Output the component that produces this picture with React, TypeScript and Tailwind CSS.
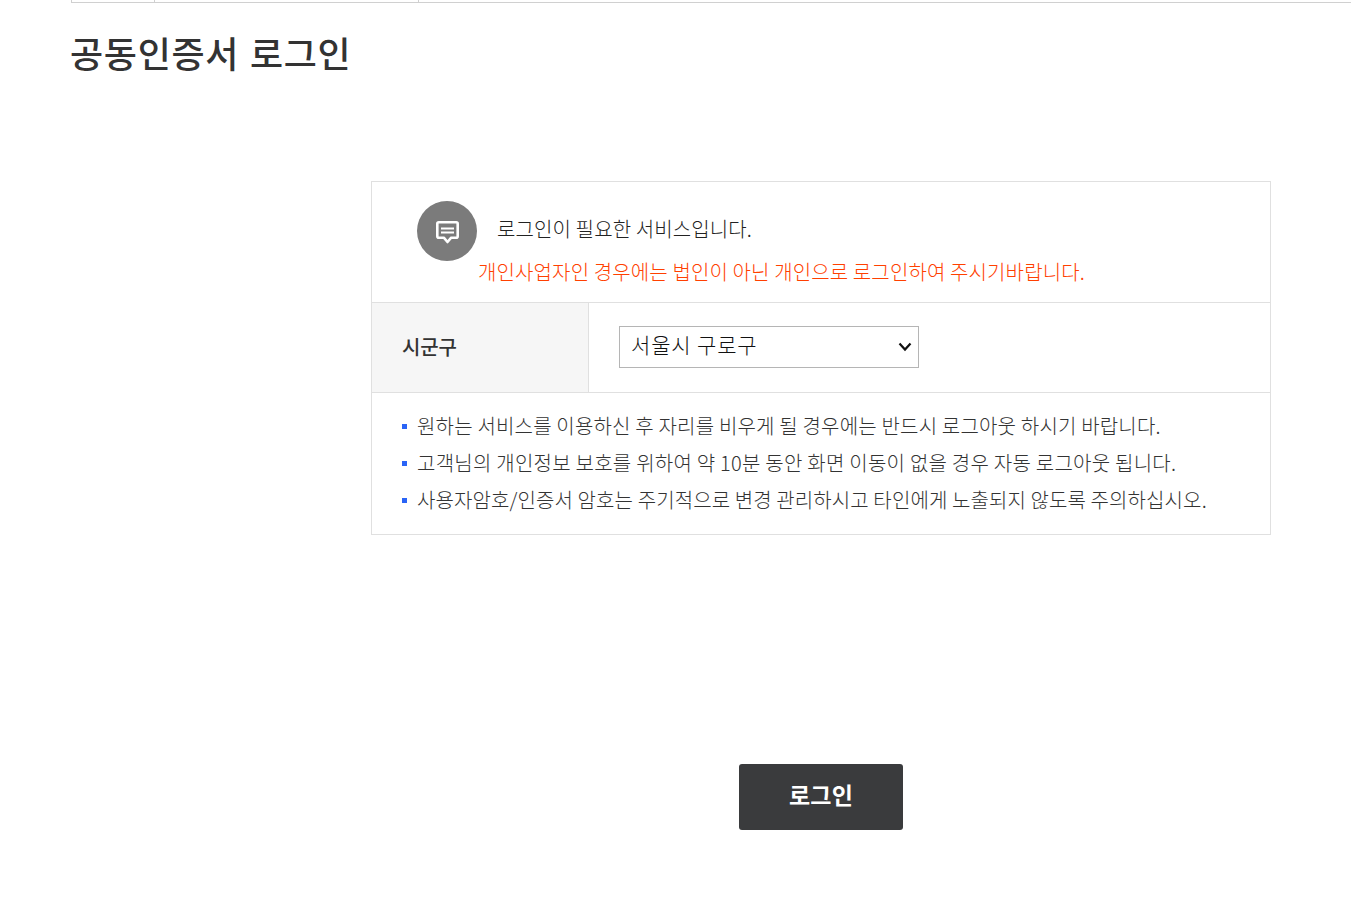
export default function App() {
  const font = { fontFamily: '"Noto Sans CJK KR", sans-serif' };
  return (
    <div style={font} className="w-[1351px] h-[913px] overflow-hidden bg-white text-[#333] flex flex-col">
      <div className="ml-[71px] h-[3px] flex border-b border-[#d0d0d0] border-l">
        <div className="w-[83px] border-r border-[#d0d0d0]" />
        <div className="w-[264px] border-r border-[#d0d0d0]" />
      </div>
      <h1 className="ml-[70px] mt-[23px] text-[36px] leading-[52px] font-medium tracking-[0.7px] [word-spacing:2px] text-[#333]">공동인증서 로그인</h1>
      <div className="ml-[371px] mt-[103px] w-[900px] border border-[#e0e0e0] flex flex-col">
        <div className="h-[121px] border-b border-[#e0e0e0] relative">
          <div className="absolute left-[45px] top-[19px] w-[60px] h-[60px] rounded-full bg-[#7b7b7b] flex items-center justify-center">
            <svg width="26" height="26" viewBox="0 0 26 26" fill="none" stroke="#fff" strokeWidth="2.6" strokeLinejoin="round" className="mt-[1px] shrink-0">
              <path d="M4.8 3.3h17.4a1.5 1.5 0 0 1 1.5 1.5v12.4a1.5 1.5 0 0 1-1.5 1.5h-5l-3.7 4.3-3.7-4.3H4.8a1.5 1.5 0 0 1-1.5-1.5V4.8a1.5 1.5 0 0 1 1.5-1.5z" />
              <path d="M7 9.5h13M7 13.5h13" strokeWidth="2" />
            </svg>
          </div>
          <p className="absolute left-[125px] top-[31px] text-[20px] font-light leading-[32px] tracking-[0.12px] text-[#222] whitespace-nowrap">로그인이 필요한 서비스입니다.</p>
          <p className="absolute left-[106px] top-[74px] text-[20px] font-light leading-[32px] tracking-[0.13px] text-[#ff4000] whitespace-nowrap">개인사업자인 경우에는 법인이 아닌 개인으로 로그인하여 주시기바랍니다.</p>
        </div>
        <div className="h-[90px] border-b border-[#e0e0e0] flex">
          <div className="w-[217px] bg-[#f6f6f6] border-r border-[#e0e0e0] flex items-center pl-[30px] pb-[2px] text-[20px] font-medium tracking-[-0.1px] text-[#333]">시군구</div>
          <div className="flex-1 flex items-center pl-[30px] pb-[2px]">
            <div className="relative w-[300px] h-[42px]">
              <select style={font} className="appearance-none w-full h-full border border-[#b5b5b5] bg-white pl-[11px] pb-[4px] text-[21px] font-light tracking-[0.85px] text-[#111] outline-none" defaultValue="서울시 구로구">
                <option>서울시 구로구</option>
              </select>
              <svg className="absolute right-[7px] top-[16px] pointer-events-none" width="14" height="10" viewBox="0 0 14 10" fill="none" stroke="#111" strokeWidth="2.2"><path d="M1.5 1.5 7 7.5l5.5-6" /></svg>
            </div>
          </div>
        </div>
        <ul className="h-[141px] pt-[15px] pl-[30px] flex flex-col text-[20px] font-light leading-[35px] text-[#333]">
          <li className="h-[37px] flex items-center gap-[10px] whitespace-nowrap tracking-[0.19px]"><span className="w-[5px] h-[5px] bg-[#2a64f6]" /><span className="pb-[2px]">원하는 서비스를 이용하신 후 자리를 비우게 될 경우에는 반드시 로그아웃 하시기 바랍니다.</span></li>
          <li className="h-[37px] flex items-center gap-[10px] whitespace-nowrap tracking-[0.25px]"><span className="w-[5px] h-[5px] bg-[#2a64f6]" /><span className="pb-[2px]">고객님의 개인정보 보호를 위하여 약 10분 동안 화면 이동이 없을 경우 자동 로그아웃 됩니다.</span></li>
          <li className="h-[37px] flex items-center gap-[10px] whitespace-nowrap tracking-[0.11px]"><span className="w-[5px] h-[5px] bg-[#2a64f6]" /><span className="pb-[2px]">사용자암호/인증서 암호는 주기적으로 변경 관리하시고 타인에게 노출되지 않도록 주의하십시오.</span></li>
        </ul>
      </div>
      <button style={font} className="ml-[739px] mt-[229px] w-[164px] h-[66px] rounded-[3px] bg-[#3a3b3d] text-white text-[23px] font-bold tracking-[0.2px] pb-[6px] flex items-center justify-center">로그인</button>
    </div>
  );
}
